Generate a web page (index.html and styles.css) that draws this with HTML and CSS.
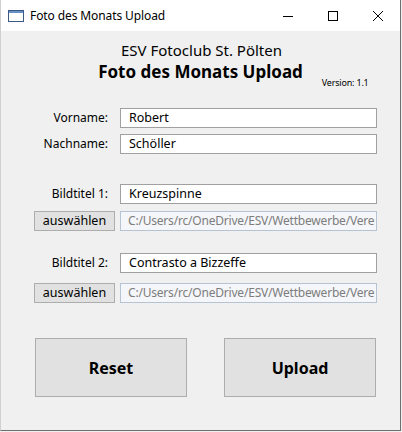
FILE: index.html
```html
<!DOCTYPE html>
<html lang="de">
<head>
<meta charset="utf-8">
<title>Foto des Monats Upload</title>
<link rel="stylesheet" href="styles.css">
</head>
<body>
<div class="window">
  <div class="titlebar">
    <svg class="app-icon" width="16" height="12" viewBox="0 0 16 12">
      <rect x="0.5" y="0.5" width="15" height="11" fill="#fff" stroke="#3c5a86"/>
      <rect x="1" y="1" width="14" height="2" fill="#6b8fc4"/>
    </svg>
    <span class="title-text">Foto des Monats Upload</span>
    <div class="controls">
      <span class="ctl"><svg width="10" height="10" viewBox="0 0 10 10"><path d="M0 5.5H10" stroke="#000" stroke-width="1"/></svg></span>
      <span class="ctl"><svg width="10" height="10" viewBox="0 0 10 10"><rect x="0.5" y="0.5" width="9" height="9" fill="none" stroke="#000"/></svg></span>
      <span class="ctl"><svg width="10" height="10" viewBox="0 0 10 10"><path d="M0 0L10 10M10 0L0 10" stroke="#000" stroke-width="1"/></svg></span>
    </div>
  </div>
  <div class="content">
    <div class="header">
      <div class="club">ESV Fotoclub St. Pölten</div>
      <div class="title-row">
        <div></div>
        <div class="main-title">Foto des Monats Upload</div>
        <div class="version">Version: 1.1</div>
      </div>
    </div>
    <div class="form">
      <label class="lbl">Vorname:</label>
      <div class="field">Robert</div>
      <label class="lbl row2">Nachname:</label>
      <div class="field row2">Schöller</div>

      <label class="lbl gap-a">Bildtitel 1:</label>
      <div class="field gap-a">Kreuzspinne</div>
      <button class="pick row-b">auswählen</button>
      <div class="field disabled row-b"><span class="path">C:/Users/rc/OneDrive/ESV/Wettbewerbe/Vere</span></div>

      <label class="lbl gap-c">Bildtitel 2:</label>
      <div class="field gap-c">Contrasto a Bizzeffe</div>
      <button class="pick row-d">auswählen</button>
      <div class="field disabled row-d"><span class="path">C:/Users/rc/OneDrive/ESV/Wettbewerbe/Vere</span></div>
    </div>
    <div class="actions">
      <button class="big">Reset</button>
      <button class="big">Upload</button>
    </div>
  </div>
</div>
</body>
</html>
```
FILE: styles.css
```css
* { box-sizing: border-box; }
html, body { margin: 0; padding: 0; }
body {
  width: 402px;
  height: 432px;
  overflow: hidden;
  background: #f0f0f0;
  font-family: "Noto Sans", "Open Sans", sans-serif;
  color: #000;
}
.window {
  width: 401px;
  height: 431px;
  background: #f0f0f0;
  border-right: 1px solid #6f6f6f;
  border-bottom: 1px solid #6f6f6f;
  border-left: 1px solid #d0d0d0;
  display: flex;
  flex-direction: column;
}
.titlebar {
  height: 31px;
  background: #fff;
  display: flex;
  align-items: center;
  padding-left: 7px;
  flex: none;
}
.app-icon { flex: none; }
.title-text {
  margin-left: 6px;
  font-size: 12px;
  letter-spacing: -0.1px;
}
.controls {
  margin-left: auto;
  display: flex;
  height: 31px;
}
.ctl {
  width: 45px;
  height: 31px;
  display: flex;
  align-items: center;
  justify-content: center;
}
.content {
  flex: 1;
  display: flex;
  flex-direction: column;
}
.header {
  padding-top: 9px;
  display: flex;
  flex-direction: column;
}
.club {
  text-align: center;
  font-size: 15px;
  line-height: 20px;
  margin-left: 2px;
}
.title-row {
  display: grid;
  grid-template-columns: 1fr auto 1fr;
  align-items: end;
}
.main-title {
  font-size: 17px;
  font-weight: bold;
  line-height: 24px;
}
.version {
  font-size: 9px;
  letter-spacing: -0.2px;
  margin-left: 19px;
  margin-bottom: -5px;
  line-height: 12px;
}
.form {
  display: grid;
  grid-template-columns: 81px 257px;
  column-gap: 5px;
  padding-left: 33px;
  margin-top: 24px;
  align-items: center;
}
.lbl {
  text-align: right;
  padding-right: 7px;
  font-size: 12px;
  line-height: 20px;
}
.field {
  height: 20px;
  background: #fff;
  border: 1px solid #a0a0a0;
  font-size: 12.5px;
  line-height: 18px;
  padding-left: 8px;
  white-space: nowrap;
  overflow: hidden;
}
.field.disabled {
  background: #f4f6f9;
  border-color: #b6c3d3;
  color: #7d7d7d;
  padding-left: 7px;
}
.path { font-size: 12px; letter-spacing: -0.2px; }
.row2 { margin-top: 6px; }
.gap-a { margin-top: 30px; }
.row-b { margin-top: 7px; }
.gap-c { margin-top: 22px; }
.row-d { margin-top: 10px; }
.pick {
  height: 20px;
  width: 81px;
  background: #e1e1e1;
  border: 1px solid #adadad;
  font-family: "Noto Sans", sans-serif;
  font-size: 12.5px;
  padding: 0;
  line-height: 18px;
  color: #000;
}
.actions {
  display: flex;
  padding-left: 34px;
  gap: 37px;
  margin-top: 35px;
}
.big {
  width: 152px;
  height: 59px;
  background: #e1e1e1;
  border: 1px solid #adadad;
  font-family: "Noto Sans", sans-serif;
  font-weight: bold;
  font-size: 16px;
  color: #000;
  padding: 0;
}
```
